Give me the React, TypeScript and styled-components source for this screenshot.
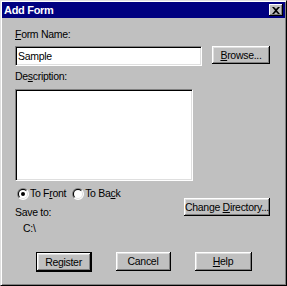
import React from "react";
import styled, { createGlobalStyle } from "styled-components";

const FONT = `"Liberation Sans", Arial, sans-serif`;

const Global = createGlobalStyle`
  html, body { margin: 0; padding: 0; background: #c0c0c0; }
  body { font-family: ${FONT}; font-size: 10px; }
`;

const Window = styled.div`
  box-sizing: border-box;
  width: 287px;
  height: 286px;
  background: #c0c0c0;
  border: 1px solid;
  border-color: #dfdfdf #000 #000 #dfdfdf;
  box-shadow: inset 1px 1px #fff, inset -1px -1px #808080;
  padding: 1px;
  display: flex;
  flex-direction: column;
  font-family: ${FONT};
  font-size: 10.5px;
  letter-spacing: -0.3px;
  line-height: 13px;
  color: #000;
`;

const TitleBar = styled.div`
  height: 16px;
  background: #000080;
  display: flex;
  align-items: center;
  justify-content: space-between;
  padding: 0 2px;
`;

const Title = styled.span`
  color: #fff;
  font-weight: bold;
  font-size: 11px;
  letter-spacing: -0.3px;
  padding-top: 1px;
`;

const CloseButton = styled.div`
  box-sizing: border-box;
  width: 14px;
  height: 12px;
  background: #c0c0c0;
  box-shadow: inset -1px -1px #000, inset 1px 1px #fff, inset -2px -2px #808080;
  display: flex;
  align-items: center;
  justify-content: center;
`;

const Body = styled.div`
  display: flex;
  flex-direction: column;
  padding: 10px 15px 0 13px;
`;

const Label = styled.div<{ $mt?: number; $ml?: number }>`
  margin-top: ${(p) => p.$mt ?? 0}px;
  margin-left: ${(p) => p.$ml ?? 0}px;
  height: 13px;
  white-space: nowrap;
`;

const U = styled.span`
  text-decoration: underline;
  text-underline-offset: 1px;
`;

const FieldRow = styled.div`
  display: flex;
  justify-content: space-between;
  align-items: flex-start;
  margin-top: 5px;
`;

const sunken = `
  border: 1px solid;
  border-color: #808080 #fff #fff #808080;
  box-shadow: inset 1px 1px #000, inset -1px -1px #dfdfdf;
  background: #fff;
`;

const TextInput = styled.input`
  box-sizing: border-box;
  width: 187px;
  height: 20px;
  ${sunken}
  padding: 0 2px;
  font-family: ${FONT};
  font-size: 10.5px;
  letter-spacing: -0.3px;
  color: #000;
  outline: none;
  margin: 0;
`;

const TextArea = styled.div`
  box-sizing: border-box;
  width: 178px;
  height: 92px;
  margin-top: 6px;
  ${sunken}
`;

const Button = styled.button<{ $w: number; $h?: number; $default?: boolean }>`
  box-sizing: border-box;
  width: ${(p) => p.$w}px;
  height: ${(p) => p.$h ?? 18}px;
  margin: 0;
  padding: 0;
  background: #c0c0c0;
  border: ${(p) => (p.$default ? "1px solid #000" : "none")};
  box-shadow: inset -1px -1px #000, inset 1px 1px #fff, inset -2px -2px #808080,
    inset 2px 2px #dfdfdf;
  font-family: ${FONT};
  font-size: 10.5px;
  letter-spacing: -0.3px;
  line-height: 13px;
  color: #000;
  display: flex;
  align-items: center;
  justify-content: center;
  flex-shrink: 0;
  white-space: nowrap;
`;

const Lower = styled.div`
  display: flex;
  justify-content: space-between;
  align-items: flex-start;
  margin-top: 6px;
`;

const LeftCol = styled.div`
  display: flex;
  flex-direction: column;
`;

const RadioRow = styled.div`
  display: flex;
  align-items: center;
  margin-left: 2px;
  height: 13px;
`;

const RadioItem = styled.label<{ $ml?: number }>`
  display: flex;
  align-items: center;
  gap: 1px;
  margin-left: ${(p) => p.$ml ?? 0}px;
  white-space: nowrap;
`;

const ChangeDirWrap = styled.div`
  margin-top: 11px;
`;

const ButtonRow = styled.div`
  display: flex;
  justify-content: center;
  gap: 24px;
  margin-top: 17px;
`;

const arc = (r: number) => {
  const c = 6;
  const d = r / Math.SQRT2;
  const x1 = c - d, y1 = c + d, x2 = c + d, y2 = c - d;
  return {
    tl: `M${x1} ${y1} A${r} ${r} 0 0 1 ${x2} ${y2} Z`,
    br: `M${x2} ${y2} A${r} ${r} 0 0 1 ${x1} ${y1} Z`,
  };
};

const Radio: React.FC<{ checked?: boolean }> = ({ checked }) => {
  const o = arc(6);
  const i = arc(5);
  return (
    <svg width="12" height="12" viewBox="0 0 12 12">
      <path d={o.tl} fill="#808080" />
      <path d={o.br} fill="#fff" />
      <path d={i.tl} fill="#000" />
      <path d={i.br} fill="#dfdfdf" />
      <circle cx="6" cy="6" r="4" fill="#fff" />
      {checked && <circle cx="6" cy="6" r="2" fill="#000" />}
    </svg>
  );
};

export default function App() {
  return (
    <>
      <Global />
      <Window>
        <TitleBar>
          <Title>Add Form</Title>
          <CloseButton>
            <svg width="8" height="7" viewBox="0 0 8 7">
              <path d="M0 0h2l2 2 2-2h2L5 3.5 8 7H6L4 5 2 7H0l3-3.5z" fill="#000" />
            </svg>
          </CloseButton>
        </TitleBar>
        <Body>
          <Label>
            <U>F</U>orm Name:
          </Label>
          <FieldRow>
            <TextInput defaultValue="Sample" readOnly />
            <Button $w={58} $h={18}>
              <span>
                <U>B</U>rowse...
              </span>
            </Button>
          </FieldRow>
          <Label $mt={4}>
            De<U>s</U>cription:
          </Label>
          <TextArea />
          <Lower>
            <LeftCol>
              <RadioRow>
                <RadioItem>
                  <Radio checked />
                  <span>
                    To F<U>r</U>ont
                  </span>
                </RadioItem>
                <RadioItem $ml={6}>
                  <Radio />
                  <span>
                    To Ba<U>c</U>k
                  </span>
                </RadioItem>
              </RadioRow>
              <Label $mt={6}>Save to:</Label>
              <Label $mt={3} $ml={8}>
                C:\
              </Label>
            </LeftCol>
            <ChangeDirWrap>
              <Button $w={86} $h={18}>
                <span>
                  Change <U>D</U>irectory...
                </span>
              </Button>
            </ChangeDirWrap>
          </Lower>
        </Body>
        <ButtonRow>
          <Button $w={56} $h={20} $default>
            <span>Register</span>
          </Button>
          <Button $w={55} $h={19}>
            <span>Cancel</span>
          </Button>
          <Button $w={57} $h={19}>
            <span>
              <U>H</U>elp
            </span>
          </Button>
        </ButtonRow>
      </Window>
    </>
  );
}
